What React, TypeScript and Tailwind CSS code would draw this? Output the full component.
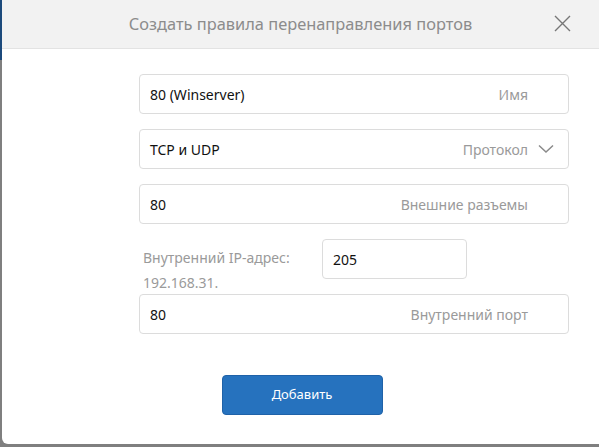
import React from 'react';

const Field: React.FC<{ value: string; label: string; chevron?: boolean }> = ({ value, label, chevron }) => (
  <div className="flex h-[40px] w-[430px] items-center rounded border border-[#dcdcdc] bg-white pl-[10px] pr-[40px]">
    <span className="flex-1 text-[14px] text-[#111]">{value}</span>
    <span className="text-[14px] text-[#9a9a9a]">{label}</span>
    {chevron && (
      <svg className="-mr-[26px] ml-[10px]" width="16" height="10" viewBox="0 0 16 10">
        <path d="M1 1.5 L8 8 L15 1.5" fill="none" stroke="#8a8a8a" strokeWidth="1.5" />
      </svg>
    )}
  </div>
);

const App: React.FC = () => {
  return (
    <div className="flex h-[447px] w-[599px] flex-col bg-[#7f7f7f] font-['Noto_Sans',sans-serif]">
      <div className="flex flex-1 overflow-hidden">
        <div className="w-[2px] flex-none">
          <div className="h-[60px] bg-[#1c4a7c]" />
        </div>
        <div className="flex flex-1 flex-col rounded-bl-[6px] bg-white">
          {/* header */}
          <div className="relative flex h-[49px] flex-none items-center justify-center border-b border-[#e3e3e3] bg-[#f2f2f2]">
            <span className="text-[16.4px] text-[#8c8c8c]">Создать правила перенаправления портов</span>
            <svg className="absolute right-[28px] top-[15px]" width="17" height="17" viewBox="0 0 17 17">
              <path d="M1 1 L16 16 M16 1 L1 16" stroke="#777" strokeWidth="1.4" />
            </svg>
          </div>

          {/* form */}
          <div className="flex flex-col pl-[137px] pt-[25px]">
            <Field value="80 (Winserver)" label="Имя" />
            <div className="mt-[15px]">
              <Field value="TCP и UDP" label="Протокол" chevron />
            </div>
            <div className="mt-[15px]">
              <Field value="80" label="Внешние разъемы" />
            </div>
            <div className="mt-[15px] flex h-[40px]">
              <div className="h-[40px] w-[183px] overflow-visible pl-[4px] pt-[6px] text-[14px] leading-[25px] text-[#9a9a9a]">
                Внутренний IP-адрес:<br />192.168.31.
              </div>
              <div className="flex h-[40px] w-[145px] items-center rounded border border-[#dcdcdc] pl-[10px] text-[14px] text-[#111]">
                205
              </div>
            </div>
            <div className="mt-[15px]">
              <Field value="80" label="Внутренний порт" />
            </div>
          </div>

          <div className="mt-[41px] flex justify-center pl-[3px]">
            <button className="h-[40px] w-[161px] rounded border border-[#1f62a8] bg-[#2672be] text-[13px] text-white">
              Добавить
            </button>
          </div>
        </div>
      </div>
      <div className="h-[3px] flex-none" />
    </div>
  );
};

export default App;
